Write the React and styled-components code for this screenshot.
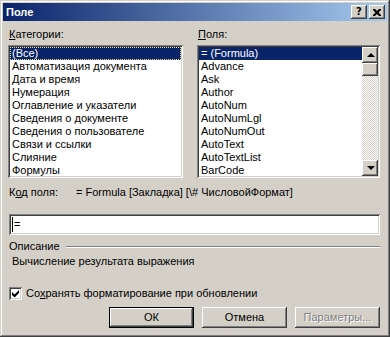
import styled, { createGlobalStyle, css } from 'styled-components'

const GlobalStyle = createGlobalStyle`
  html, body {
    margin: 0;
    padding: 0;
    background: #d4d0c8;
  }
  body {
    font-family: "Liberation Sans", Arial, sans-serif;
    font-size: 11px;
    color: #000;
  }
  * { box-sizing: border-box; }
`

const raised = css`
  box-shadow:
    inset -1px -1px #404040,
    inset 1px 1px #fff,
    inset -2px -2px #808080,
    inset 2px 2px #d4d0c8;
`

const sunken = css`
  box-shadow:
    inset 1px 1px #808080,
    inset -1px -1px #fff,
    inset 2px 2px #404040,
    inset -2px -2px #d4d0c8;
`

const categories = [
  '(Все)',
  'Автоматизация документа',
  'Дата и время',
  'Нумерация',
  'Оглавление и указатели',
  'Сведения о документе',
  'Сведения о пользователе',
  'Связи и ссылки',
  'Слияние',
  'Формулы',
]

const fields = [
  '= (Formula)',
  'Advance',
  'Ask',
  'Author',
  'AutoNum',
  'AutoNumLgl',
  'AutoNumOut',
  'AutoText',
  'AutoTextList',
  'BarCode',
]

export default function App() {
  return (
    <>
      <GlobalStyle />
      <Window>
        <TitleBar>
          <Title>Поле</Title>
          <TitleButton>
            <Help>?</Help>
          </TitleButton>
          <TitleButton>
            <svg width="8" height="7" viewBox="0 0 8 7">
              <path d="M0 0h2l2 2 2-2h2v1L5.5 3.5 8 6v1H6L4 5 2 7H0V6l2.5-2.5L0 1z" fill="#000" />
            </svg>
          </TitleButton>
        </TitleBar>

        <Content>
          <Columns>
            <Column>
              <Label><u>К</u>атегории:</Label>
              <ListBox>
                <Items>
                  {categories.map((c, i) => (
                    <Item key={c} selected={i === 0} focused={i === 0}>{c}</Item>
                  ))}
                </Items>
              </ListBox>
            </Column>
            <Column>
              <Label><u>П</u>оля:</Label>
              <ListBox>
                <Items>
                  {fields.map((f, i) => (
                    <Item key={f} selected={i === 0}>{f}</Item>
                  ))}
                </Items>
                <ScrollBar>
                  <ScrollButton>
                    <Arrow up />
                  </ScrollButton>
                  <Thumb />
                  <Track />
                  <ScrollButton>
                    <Arrow />
                  </ScrollButton>
                </ScrollBar>
              </ListBox>
            </Column>
          </Columns>

          <CodeRow>
            <CodeLabel>К<u>о</u>д поля:</CodeLabel>
            <span>= Formula [Закладка] [\# ЧисловойФормат]</span>
          </CodeRow>

          <TextInput>
            <Caret />
            =
          </TextInput>

          <GroupHeader>
            <span>Описание</span>
            <Etched />
          </GroupHeader>
          <Description>Вычисление результата выражения</Description>

          <CheckRow>
            <CheckBox>
              <svg width="7" height="7" viewBox="0 0 7 7">
                <path d="M0 2v3l2 2h1l4-4V0L2.5 4.5z" fill="#000" />
              </svg>
            </CheckBox>
            <span>Со<u>х</u>ранять форматирование при обновлении</span>
          </CheckRow>

          <Buttons>
            <Button primary>ОК</Button>
            <Button>Отмена</Button>
            <Button disabled>Параметры...</Button>
          </Buttons>
        </Content>
      </Window>
    </>
  )
}

const Window = styled.div`
  width: 390px;
  height: 337px;
  padding: 3px;
  background: #d4d0c8;
  display: flex;
  flex-direction: column;
  box-shadow:
    inset -1px -1px #404040,
    inset 1px 1px #d4d0c8,
    inset -2px -2px #808080,
    inset 2px 2px #fff;
`

const TitleBar = styled.div`
  height: 18px;
  display: flex;
  align-items: center;
  gap: 2px;
  padding: 0 2px 0 3px;
  background: linear-gradient(90deg, #0a246a, #a6caf0);
`

const Title = styled.div`
  flex: 1;
  color: #fff;
  font-weight: bold;
  font-size: 11px;
  line-height: 18px;
`

const TitleButton = styled.div`
  width: 16px;
  height: 14px;
  background: #d4d0c8;
  display: flex;
  align-items: center;
  justify-content: center;
  ${raised};
`

const Help = styled.span`
  font-family: "DejaVu Sans", sans-serif;
  font-weight: bold;
  font-size: 10px;
  line-height: 10px;
`

const Content = styled.div`
  padding: 7px 7px 0 5px;
  display: flex;
  flex-direction: column;
`

const Columns = styled.div`
  display: grid;
  grid-template-columns: 175px 183px;
  column-gap: 14px;
`

const Column = styled.div`
  display: flex;
  flex-direction: column;
`

const Label = styled.div`
  height: 13px;
  line-height: 13px;
  margin: 0 0 4px 1px;
`

const ListBox = styled.div`
  height: 133px;
  padding: 2px;
  background: #fff;
  display: flex;
  ${sunken};
`

const Items = styled.div`
  flex: 1;
  overflow: hidden;
`

const Item = styled.div`
  height: 13px;
  line-height: 13px;
  padding-left: 2px;
  white-space: nowrap;
  background: ${p => (p.selected ? '#0a246a' : 'transparent')};
  color: ${p => (p.selected ? '#fff' : '#000')};
  outline: ${p => (p.focused ? '1px dotted #e8e08a' : 'none')};
  outline-offset: -1px;
`

const ScrollBar = styled.div`
  width: 16px;
  display: flex;
  flex-direction: column;
`

const ScrollButton = styled.div`
  width: 16px;
  height: 16px;
  background: #d4d0c8;
  display: flex;
  align-items: center;
  justify-content: center;
  ${raised};
`

const Arrow = styled.div`
  width: 0;
  height: 0;
  border-left: 4px solid transparent;
  border-right: 4px solid transparent;
  ${p => (p.up ? 'border-bottom: 4px solid #000;' : 'border-top: 4px solid #000;')}
  margin-left: 1px;
`

const Thumb = styled.div`
  height: 13px;
  background: #d4d0c8;
  ${raised};
`

const Track = styled.div`
  flex: 1;
  background: repeating-conic-gradient(#fff 0 25%, #d4d0c8 0 50%) 0 0 / 2px 2px;
`

const CodeRow = styled.div`
  display: flex;
  height: 13px;
  line-height: 13px;
  margin-top: 8px;
  padding-left: 1px;
`

const CodeLabel = styled.span`
  width: 67px;
`

const TextInput = styled.div`
  height: 21px;
  margin: 15px 0 0 1px;
  padding: 0 0 0 4px;
  background: #fff;
  display: flex;
  align-items: center;
  line-height: 13px;
  ${sunken};
`

const Caret = styled.span`
  width: 1px;
  height: 15px;
  background: #000;
  margin-left: -1px;
  margin-right: 1px;
`

const GroupHeader = styled.div`
  display: flex;
  align-items: center;
  gap: 6px;
  height: 13px;
  line-height: 13px;
  margin-top: 5px;
  padding-left: 1px;
`

const Etched = styled.div`
  flex: 1;
  border-top: 1px solid #808080;
  border-bottom: 1px solid #fff;
`

const Description = styled.div`
  height: 13px;
  line-height: 13px;
  margin-top: 2px;
  padding-left: 4px;
`

const CheckRow = styled.div`
  display: flex;
  align-items: center;
  gap: 4px;
  height: 13px;
  line-height: 13px;
  margin-top: 19px;
  padding-left: 1px;
`

const CheckBox = styled.div`
  width: 13px;
  height: 13px;
  background: #fff;
  display: flex;
  align-items: center;
  justify-content: center;
  ${sunken};
`

const Buttons = styled.div`
  display: flex;
  justify-content: flex-end;
  gap: 8px;
  margin-top: 7px;
`

const Button = styled.div`
  width: 85px;
  height: 21px;
  line-height: 21px;
  text-align: center;
  background: #d4d0c8;
  color: ${p => (p.disabled ? '#808080' : '#000')};
  text-shadow: ${p => (p.disabled ? '1px 1px #fff' : 'none')};
  ${p =>
    p.primary
      ? css`
          box-shadow:
            inset 0 0 0 1px #000,
            inset -2px -2px #404040,
            inset 2px 2px #fff,
            inset -3px -3px #808080,
            inset 3px 3px #d4d0c8;
        `
      : raised};
`
